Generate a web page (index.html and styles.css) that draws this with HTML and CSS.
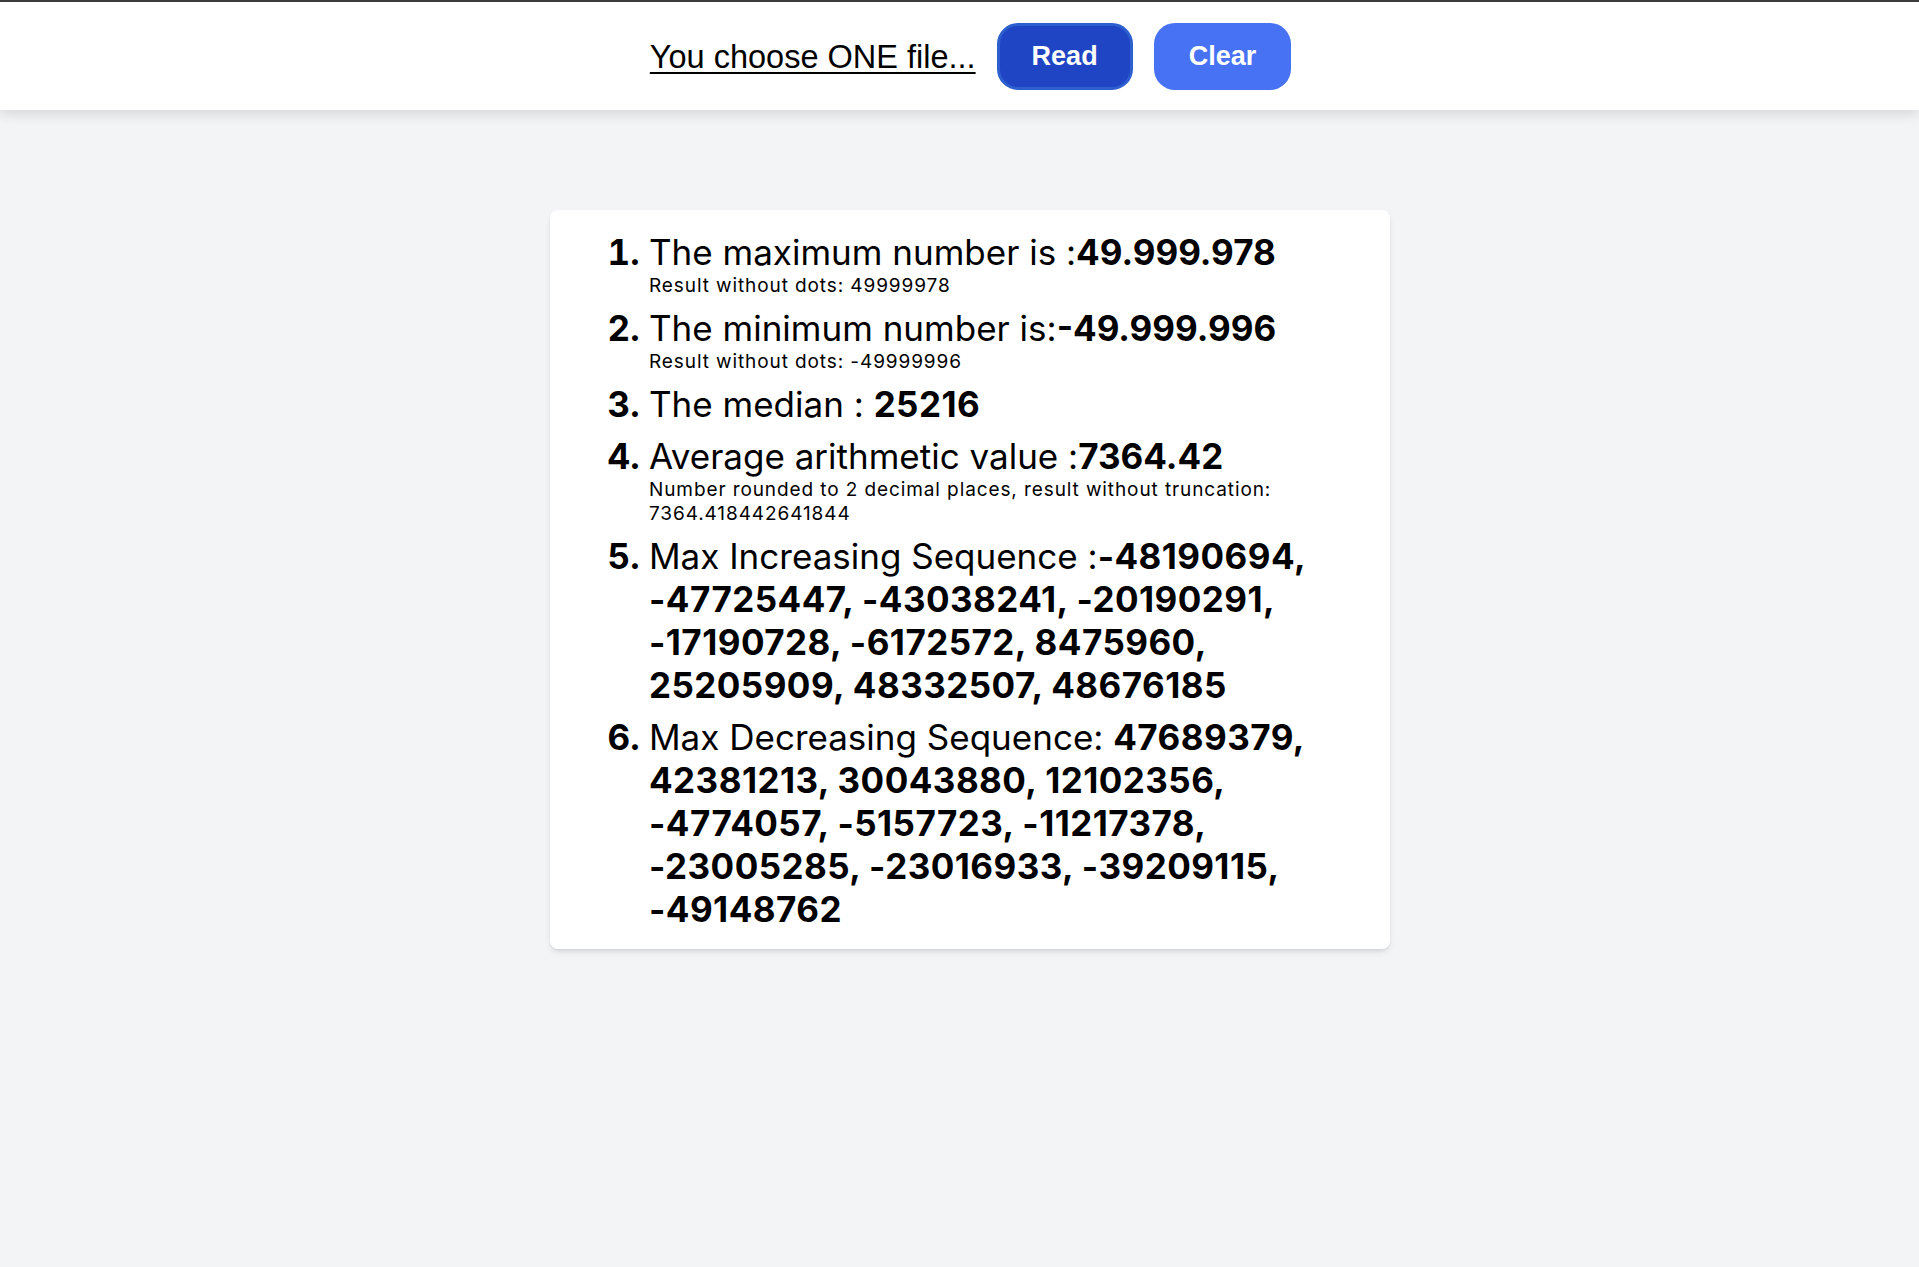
FILE: index.html
```html
<!DOCTYPE html>
<html lang="en">
<head>
<meta charset="utf-8">
<title>Numbers</title>
<link rel="stylesheet" href="styles.css">
</head>
<body>
<header class="topbar">
  <div class="topbar-inner">
    <label class="file-label">You choose ONE file...</label>
    <button class="btn btn-read">Read</button>
    <button class="btn btn-clear">Clear</button>
  </div>
</header>
<main class="main">
  <section class="card">
    <ol class="results">
      <li>
        <div class="big">The maximum number is :<b>49.999.978</b></div>
        <div class="small">Result without dots: 49999978</div>
      </li>
      <li>
        <div class="big">The minimum number is:<b>-49.999.996</b></div>
        <div class="small">Result without dots: -49999996</div>
      </li>
      <li>
        <div class="big">The median : <b class="num">25216</b></div>
      </li>
      <li>
        <div class="big">Average arithmetic value :<b>7364.42</b></div>
        <div class="small">Number rounded to 2 decimal places, result without truncation: 7364.418442641844</div>
      </li>
      <li>
        <div class="big">Max Increasing Sequence :<b class="num">-48190694, -47725447, -43038241, -20190291, -17190728, -6172572, 8475960, 25205909, 48332507, 48676185</b></div>
      </li>
      <li>
        <div class="big">Max Decreasing Sequence: <b class="num">47689379, 42381213, 30043880, 12102356, -4774057, -5157723, -11217378, -23005285, -23016933, -39209115, -49148762</b></div>
      </li>
    </ol>
  </section>
</main>
</body>
</html>
```

FILE: styles.css
```css
* { box-sizing: border-box; }

html, body {
  margin: 0;
  padding: 0;
}

body {
  background: #f3f4f6;
  min-height: 1267px;
  font-family: Inter, "Noto Sans", sans-serif;
  color: #000;
  border-top: 2px solid #3d3d3d;
}

.topbar {
  background: #fff;
  height: 108px;
  box-shadow: 0 4px 12px rgba(0, 0, 0, 0.12);
}

.topbar-inner {
  height: 100%;
  display: flex;
  align-items: center;
  justify-content: center;
  gap: 21px;
  padding-left: 22px;
}

.file-label {
  font-family: "Liberation Sans", Arial, sans-serif;
  font-size: 32.5px;
  text-decoration: underline;
  text-decoration-thickness: 2px;
  text-underline-offset: 4px;
  color: #000;
  margin-top: 2px;
}

.btn {
  font-family: "Liberation Sans", Arial, sans-serif;
  font-weight: bold;
  font-size: 27px;
  line-height: 31px;
  color: #fff;
  border-radius: 21px;
  height: 67px;
  cursor: pointer;
}

.btn-read {
  background: #2045c4;
  border: 3px solid #2d5fcf;
  padding: 0 32px;
}

.btn-clear {
  background: #4872f4;
  border: 0;
  padding: 0 35px;
}

.main {
  padding-top: 100px;
  padding-left: 21px;
}

.card {
  width: 840px;
  margin: 0 auto;
  background: #fff;
  border-radius: 8px;
  box-shadow: 0 4px 6px -1px rgba(0, 0, 0, 0.1), 0 2px 4px -2px rgba(0, 0, 0, 0.1);
  padding: 21px 40px 18px 58px;
}

.results {
  margin: 0;
  padding-left: 41px;
  display: flex;
  flex-direction: column;
  gap: 9px;
}

.results li::marker {
  font-weight: 700;
  font-size: 35px;
}

.big {
  font-size: 35px;
  line-height: 43px;
  font-weight: 400;
}

.big b {
  font-weight: 700;
}

.big .num {
  letter-spacing: 0.45px;
}

.small {
  font-size: 19px;
  line-height: 24px;
  letter-spacing: 0.9px;
}
```
